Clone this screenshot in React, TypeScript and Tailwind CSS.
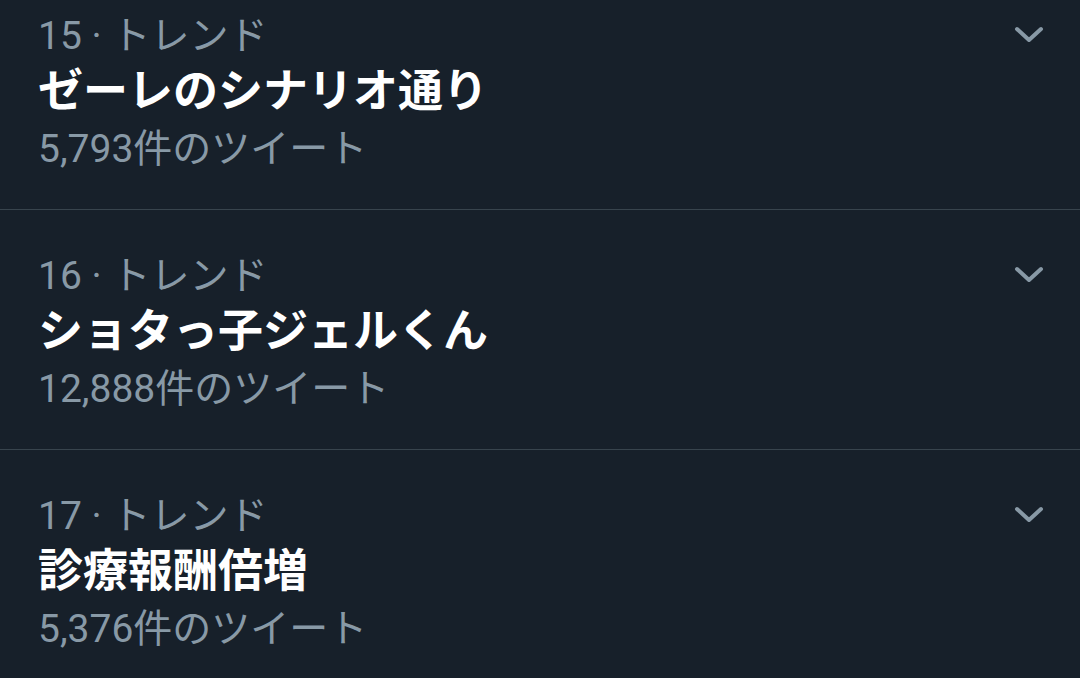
const trends = [
  { rank: 15, name: "ゼーレのシナリオ通り", count: "5,793" },
  { rank: 16, name: "ショタっ子ジェルくん", count: "12,888" },
  { rank: 17, name: "診療報酬倍増", count: "5,376" },
];

function Chevron() {
  return (
    <svg width="32" height="20" viewBox="0 0 32 20" fill="none">
      <path
        d="M4 4 L16 15 L28 4"
        stroke="#8899a6"
        strokeWidth="4"
        strokeLinecap="round"
        strokeLinejoin="round"
      />
    </svg>
  );
}

function TrendRow({ rank, name, count }: { rank: number; name: string; count: string }) {
  return (
    <div className="flex h-[240px] items-start justify-between border-b border-[#38444d] pl-[38px] pr-[35px] pt-[42px]">
      <div className="flex flex-col">
        <div className="text-[39px] leading-[48px] text-[#8899a6]">
          {rank} · トレンド
        </div>
        <div className="text-[45px] font-bold leading-[64px] text-white">
          {name}
        </div>
        <div className="mt-[1px] text-[39px] leading-[48px] text-[#8899a6]">
          {count}件のツイート
        </div>
      </div>
      <div className="mt-[13px]">
        <Chevron />
      </div>
    </div>
  );
}

export default function App() {
  return (
    <main
      className="h-[678px] w-[1080px] overflow-hidden bg-[#17202a]"
      style={{ fontFamily: 'Roboto, "Noto Sans CJK JP", sans-serif' }}
    >
      <div className="mt-[-30px] flex flex-col">
        {trends.map((t) => (
          <TrendRow key={t.rank} {...t} />
        ))}
      </div>
    </main>
  );
}
